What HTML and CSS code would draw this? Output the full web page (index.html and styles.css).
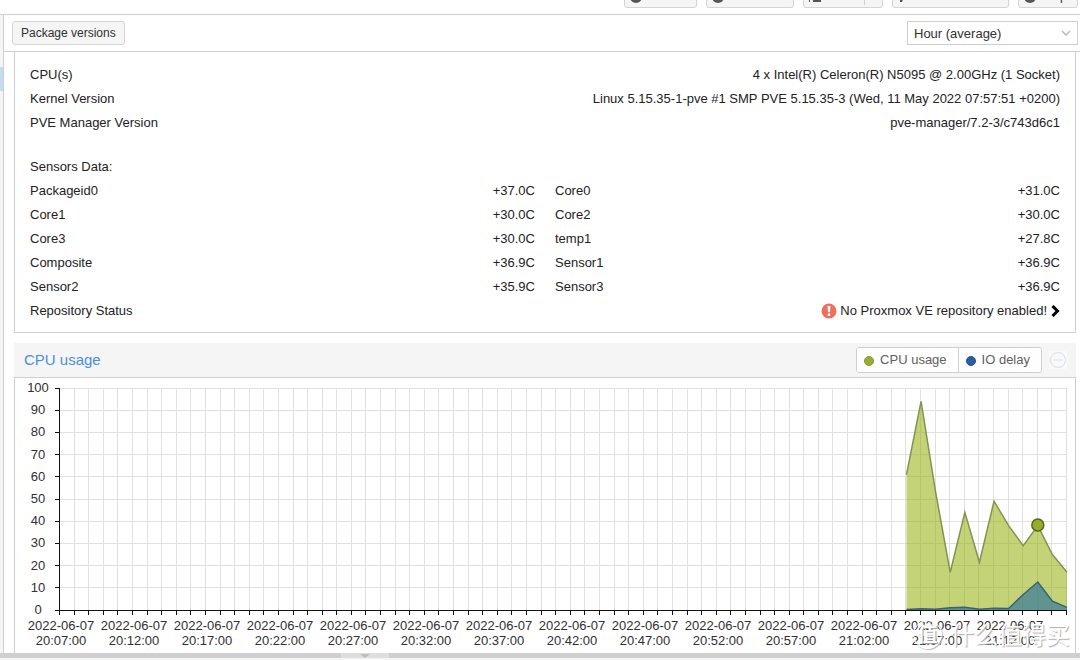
FILE: index.html
```html
<!DOCTYPE html>
<html lang="en">
<head>
<meta charset="utf-8">
<title>Proxmox VE - Node summary</title>
<link rel="stylesheet" href="styles.css">
</head>
<body>
<div class="app">
  <header class="node-bar">
    <button class="btn reboot"><svg class="glyph" viewBox="0 0 12 12"><circle cx="6" cy="6" r="6"/></svg>Reboot</button>
    <button class="btn shutdown"><svg class="glyph" viewBox="0 0 12 12"><circle cx="6" cy="6" r="6"/></svg>Shutdown</button>
    <button class="btn shell"><svg class="glyph" viewBox="0 0 12 12"><path d="M0 1h2v2H0zM0 9h1v2H0zM4 9h8v2H4z"/></svg>Shell<span class="split"></span></button>
    <button class="btn bulk"><svg class="glyph" viewBox="0 0 12 12"><path d="M2 1h8L6 6l-2 5H2z"/></svg>Bulk Actions</button>
    <button class="btn help"><svg class="glyph" viewBox="0 0 12 12"><circle cx="6" cy="6" r="6"/></svg>Help</button>
  </header>
  <div class="work">
    <aside class="tree"><div class="tree-selected"></div></aside>
    <main class="content">
      <div class="tool-bar">
        <button class="btn">Package versions</button>
        <div class="combo">
          <select class="combo-select" aria-label="Time range"><option>Hour (average)</option></select>
          <svg class="combo-arrow" viewBox="0 0 10 6"><path d="M1 1l4 4 4-4"/></svg>
        </div>
      </div>
      <div class="panels">
        <section class="info">
          <div class="row"><span>CPU(s)</span><span>4 x Intel(R) Celeron(R) N5095 @ 2.00GHz (1 Socket)</span></div>
          <div class="row"><span>Kernel Version</span><span>Linux 5.15.35-1-pve #1 SMP PVE 5.15.35-3 (Wed, 11 May 2022 07:57:51 +0200)</span></div>
          <div class="row"><span>PVE Manager Version</span><span>pve-manager/7.2-3/c743d6c1</span></div>
          <div class="row sensors-title"><span>Sensors Data:</span></div>
          <div class="sensors">
            <div class="row"><span>Packageid0</span><span>+37.0C</span></div>
            <div class="row"><span>Core0</span><span>+31.0C</span></div>
            <div class="row"><span>Core1</span><span>+30.0C</span></div>
            <div class="row"><span>Core2</span><span>+30.0C</span></div>
            <div class="row"><span>Core3</span><span>+30.0C</span></div>
            <div class="row"><span>temp1</span><span>+27.8C</span></div>
            <div class="row"><span>Composite</span><span>+36.9C</span></div>
            <div class="row"><span>Sensor1</span><span>+36.9C</span></div>
            <div class="row"><span>Sensor2</span><span>+35.9C</span></div>
            <div class="row"><span>Sensor3</span><span>+36.9C</span></div>
          </div>
          <div class="row">
            <span>Repository Status</span>
            <span class="repo">
              <svg class="alert" viewBox="0 0 16 16"><circle cx="8" cy="8" r="7.5"/><path d="M6.6 3h2.8l-.4 6.3H7zM6.8 10.6h2.4v2.3H6.8z"/></svg>
              No Proxmox VE repository enabled!
              <svg class="chevron" viewBox="0 0 9 12"><path d="M1.5 1L6.5 6l-5 5"/></svg>
            </span>
          </div>
        </section>
        <section class="chart-panel">
          <div class="chart-head">
            <h2 class="chart-title">CPU usage</h2>
            <div class="legend">
              <button class="legend-item"><i class="dot cpu"></i>CPU usage</button>
              <button class="legend-item"><i class="dot io"></i>IO delay</button>
            </div>
            <button class="collapse" aria-label="Collapse"><svg viewBox="0 0 18 18"><circle cx="9" cy="9" r="7.5"/><path d="M4.5 9h9"/></svg></button>
          </div>
          <div class="chart-body">
            <svg class="chart" id="chart" viewBox="0 0 1060 275"></svg>
            <div class="watermark"><span class="mark-logo">值</span><span>什么值得买</span></div>
          </div>
        </section>
      </div>
    </main>
  </div>
  <footer class="splitter"><span class="handle"></span></footer>
</div>
<script src="chart.js"></script>
</body>
</html>
```
FILE: chart.js
```js
const chart = document.getElementById("chart");
const LEFT = 45, RIGHT = 1052, TOP = 10, BASE = 232, STEPS = 69, START = 58;
const cpu = [61, 94, 53, 17, 44, 21.5, 49, 38, 29, 38, 25, 17];
const io = [0.2, 0.6, 0.3, 1, 1.2, 0.3, 0.8, 0.7, 7, 12.6, 4, 1.2];

function add(tag, attrs, text) {
  const el = document.createElementNS("http://www.w3.org/2000/svg", tag);
  for (const key in attrs) el.setAttribute(key, attrs[key]);
  if (text !== undefined) el.textContent = text;
  chart.appendChild(el);
}
const xAt = i => LEFT + (RIGHT - LEFT) * i / STEPS;
const yAt = v => BASE - (BASE - TOP) * v / 100;
const snap = n => Math.floor(n) + 0.5;

for (let i = 1; i <= STEPS; i++) {
  const x = snap(xAt(i) - 0.5);
  add("path", { class: "grid", d: `M${x} ${TOP}V${BASE}` });
}
for (let v = 10; v <= 100; v += 10) {
  add("path", { class: "grid", d: `M${LEFT} ${snap(yAt(v))}H${RIGHT}` });
}

function area(values, name) {
  const pts = values.map((v, k) => `${xAt(START + k)} ${yAt(v)}`).join("L");
  add("path", { class: `${name}-fill`, d: `M${xAt(START)} ${BASE}L${pts}V${BASE}Z` });
  add("path", { class: `${name}-line`, d: `M${pts}` });
}
area(cpu, "cpu");
area(io, "io");

add("path", { class: "axis", d: `M${LEFT - 0.5} ${TOP}V${BASE}M${LEFT - 5} ${BASE + 0.5}H${RIGHT}` });
for (let v = 0; v <= 100; v += 10) {
  const y = snap(yAt(v));
  add("path", { class: "axis", d: `M${LEFT - 5} ${y}H${LEFT}` });
  add("text", { class: "tick-label", x: 23, y: Math.round(yAt(v)) + 4 }, v);
}
for (let i = 0; i <= STEPS; i++) {
  add("path", { class: "axis", d: `M${snap(xAt(i) - 0.5)} ${BASE}v5` });
}
for (let k = 0; k <= 13; k++) {
  const minutes = 20 * 60 + 7 + k * 5;
  const time = `${Math.floor(minutes / 60)}:${String(minutes % 60).padStart(2, "0")}:00`;
  const x = Math.round(xAt(k * 5)) + 1;
  add("text", { class: "tick-label", x, y: 252 }, "2022-06-07");
  add("text", { class: "tick-label", x, y: 267 }, time);
}
add("circle", { class: "marker", cx: xAt(67), cy: 147, r: 6 });
```
FILE: styles.css
```css
* { box-sizing: border-box; }
body {
  margin: 0;
  font: 13px/24px "Liberation Sans", Arial, "Noto Sans CJK SC", sans-serif;
  color: #303030;
  background: #fff;
}
button, select { font: inherit; color: inherit; }
.app { display: flex; flex-direction: column; height: 100vh; overflow: hidden; }

.node-bar {
  display: flex;
  flex: none;
  justify-content: flex-end;
  align-items: flex-end;
  gap: 9px;
  height: 15px;
  padding: 0 2px 6px 0;
  overflow: hidden;
  border-bottom: 1px solid #cfcfcf;
}
.btn {
  height: 24px;
  padding: 0 8px;
  border: 1px solid #d4d4d4;
  border-radius: 3px;
  background: #f5f5f5;
  font-size: 12px;
  line-height: 22px;
  white-space: nowrap;
}
.node-bar .btn { display: flex; gap: 6px; padding: 0 5px; overflow: hidden; line-height: 26px; height: 26px; }
.glyph { flex: none; width: 12px; height: 12px; margin-top: 8px; fill: #555; }
.reboot { width: 73px; }
.shutdown { width: 88px; }
.shell { width: 80px; }
.bulk { width: 117px; }
.help { width: 60px; }
.split { width: 1px; height: 22px; margin-left: 4px; background: #d0d0d0; }

.work { display: flex; flex: 1; min-height: 0; }
.tree { flex: none; width: 4px; padding-top: 52px; background: #f5f5f5; border-right: 1px solid #cfcfcf; }
.tree-selected { height: 24px; background: #c2ddf2; }
.content { display: flex; flex: 1; flex-direction: column; min-width: 0; overflow: hidden; }
.tool-bar {
  display: flex;
  flex: none;
  justify-content: space-between;
  align-items: center;
  height: 37px;
  padding: 0 2px 0 8px;
  border-bottom: 1px solid #cfcfcf;
}
.combo { position: relative; width: 171px; }
.combo-select {
  display: block;
  width: 100%;
  height: 24px;
  padding: 0 6px;
  border: 1px solid #cfcfcf;
  border-radius: 0;
  background: #fff;
  appearance: none;
}
.combo-arrow { position: absolute; top: 9px; right: 7px; width: 10px; height: 6px; fill: none; stroke: #b8b8b8; stroke-width: 1.5; pointer-events: none; }

.panels { padding: 0 4px 0 10px; }
.info { padding: 11px 15px 9px; border: 1px solid #cfcfcf; border-top: 0; margin-bottom: 10px; color: #222; }
.row { display: flex; justify-content: space-between; height: 24px; white-space: nowrap; }
.sensors-title { margin-top: 20px; }
.sensors { display: grid; grid-template-columns: 1fr 1fr; column-gap: 20px; }
.repo { display: flex; align-items: center; gap: 3px; }
.alert { width: 16px; height: 16px; fill: #ee6f5f; }
.alert path { fill: #fff; }
.chevron { width: 9px; height: 12px; margin-left: 1px; fill: none; stroke: #000; stroke-width: 3; }

.chart-head { display: flex; align-items: center; height: 34px; padding: 0 9px 0 10px; background: #f5f5f5; }
.chart-title { flex: 1; margin: 0; font-size: 15px; font-weight: 400; color: #4a90d9; }
.legend { display: flex; height: 26px; border: 1px solid #cfcfcf; border-radius: 3px; background: #fff; overflow: hidden; }
.legend-item { display: flex; align-items: center; gap: 6px; padding: 0 11px 0 7px; border: 0; background: #fff; color: #606060; }
.legend-item + .legend-item { border-left: 1px solid #cfcfcf; }
.dot { width: 10px; height: 10px; border-radius: 50%; border: 1px solid; margin-top: 2px; }
.cpu { background: #98ad38; border-color: #84982c; }
.io { background: #2b5ea8; border-color: #234f90; }
.collapse { width: 18px; height: 18px; margin-left: 7px; padding: 0; border: 0; background: #f8f9fa; }
.collapse svg { display: block; fill: none; stroke: #d5e1ef; }

.chart-body { position: relative; border: 1px solid #cfcfcf; border-bottom: 0; }
.chart { display: block; width: 100%; }
.grid { stroke: #e0e0e0; }
.axis { stroke: #111; fill: none; }
.tick-label { font-size: 13px; text-anchor: middle; fill: #303030; }
.cpu-fill { fill: #94ae0a; fill-opacity: 0.55; }
.cpu-line { fill: none; stroke: #839450; stroke-width: 1.5; }
.io-fill { fill: #115fa6; fill-opacity: 0.55; }
.io-line { fill: none; stroke: #3b6275; stroke-width: 1.5; }
.marker { fill: #94ae2c; stroke: #56661a; stroke-width: 1.5; }

.watermark {
  position: absolute;
  right: 5px;
  bottom: 4px;
  display: flex;
  align-items: center;
  gap: 8px;
  font-family: "Noto Sans CJK SC", sans-serif;
  font-size: 24px;
  line-height: 30px;
  color: #fff;
  text-shadow: 1px 1px 1px #aaa;
}
.mark-logo {
  flex: none;
  width: 29px;
  height: 29px;
  border: 1px solid #fff;
  border-radius: 50%;
  font-size: 20px;
  font-weight: 700;
  line-height: 26px;
  text-align: center;
  text-shadow: 1px 1px 1px #999;
  box-shadow: 1px 1px 1px #bbb;
}

.splitter { flex: none; height: 7px; padding-left: 341px; background: #cfcfcf; border-bottom: 2px solid #f5f5f5; }
.handle { display: block; width: 48px; height: 5px; background: #dedede; overflow: hidden; }
.handle::before {
  content: "";
  display: block;
  width: 0;
  margin: 1px auto 0;
  border: 5px solid transparent;
  border-top: 4px solid #bdbdbd;
  border-bottom: 0;
}
```
